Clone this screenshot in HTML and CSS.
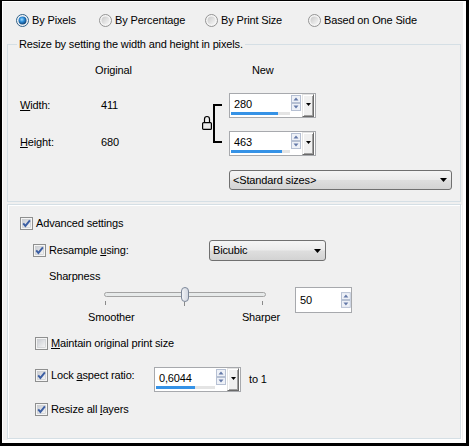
FILE: index.html
```html
<!DOCTYPE html>
<html>
<head>
<meta charset="utf-8">
<title>Resize</title>
<link rel="stylesheet" href="styles.css">
</head>
<body>
<svg class="defs" width="0" height="0" aria-hidden="true">
  <defs>
    <linearGradient id="rin" x1="0" y1="0" x2="1" y2="1">
      <stop offset="0" stop-color="#c8c8c8"/><stop offset="1" stop-color="#f8f8f8"/>
    </linearGradient>
    <radialGradient id="rdot" cx="0.42" cy="0.38" r="0.65">
      <stop offset="0" stop-color="#9fdcff"/><stop offset="0.45" stop-color="#2b8ad6"/><stop offset="1" stop-color="#0f3d6c"/>
    </radialGradient>
    <linearGradient id="cin" x1="0" y1="0" x2="1" y2="1">
      <stop offset="0" stop-color="#c9ccd2"/><stop offset="1" stop-color="#f6f6f6"/>
    </linearGradient>
    <linearGradient id="thumb" x1="0" y1="0" x2="1" y2="0">
      <stop offset="0" stop-color="#f4f5f8"/><stop offset="1" stop-color="#cfd4de"/>
    </linearGradient>
    <symbol id="r-off" viewBox="0 0 13 13">
      <circle cx="6.5" cy="6.5" r="6" fill="#f5f5f5" stroke="#939393"/>
      <circle cx="6.5" cy="6.5" r="4" fill="url(#rin)"/>
    </symbol>
    <symbol id="r-on" viewBox="0 0 13 13">
      <circle cx="6.5" cy="6.5" r="6" fill="#f3f5f8" stroke="#2f5f86"/>
      <circle cx="6.5" cy="6.5" r="4" fill="url(#rdot)"/>
    </symbol>
    <symbol id="c-off" viewBox="0 0 13 13">
      <rect x="0.5" y="0.5" width="12" height="12" fill="#f5f5f5" stroke="#8e8f8f"/>
      <rect x="2.5" y="2.5" width="8" height="8" fill="url(#cin)" stroke="#c4c6ca" stroke-width="0.6"/>
    </symbol>
    <symbol id="c-on" viewBox="0 0 13 13">
      <rect x="0.5" y="0.5" width="12" height="12" fill="#f5f5f5" stroke="#8e8f8f"/>
      <rect x="2.5" y="2.5" width="8" height="8" fill="url(#cin)" stroke="#c4c6ca" stroke-width="0.6"/>
      <path d="M3.2 6.3 L5.4 8.9 L9.9 3.4" fill="none" stroke="#3b5ea3" stroke-width="1.9"/>
    </symbol>
    <symbol id="arrows" viewBox="0 0 10 16">
      <rect x="0.5" y="0.5" width="9" height="7" fill="#eef1f7" stroke="#b6c0d3"/>
      <path d="M2.5 5.5 L5 2.5 L7.5 5.5Z" fill="#6479a8"/>
      <rect x="0.5" y="8.5" width="9" height="7" fill="#eef1f7" stroke="#b6c0d3"/>
      <path d="M2.5 10.5 L7.5 10.5 L5 13.5Z" fill="#6479a8"/>
    </symbol>
    <symbol id="tri" viewBox="0 0 7 4">
      <path d="M0 0 H7 L3.5 4Z" fill="#000"/>
    </symbol>
  </defs>
</svg>

<div class="frame">
  <div class="modes">
    <label class="opt o1"><svg class="rb"><use href="#r-on"/></svg><span>By Pixels</span></label>
    <label class="opt o2"><svg class="rb"><use href="#r-off"/></svg><span>By Percentage</span></label>
    <label class="opt o3"><svg class="rb"><use href="#r-off"/></svg><span>By Print Size</span></label>
    <label class="opt"><svg class="rb"><use href="#r-off"/></svg><span>Based on One Side</span></label>
  </div>

  <fieldset class="group g1">
    <legend>Resize by setting the width and height in pixels.</legend>
    <div class="dims">
      <span class="h-orig">Original</span>
      <span class="h-new">New</span>

      <span class="lbl row2"><u>W</u>idth:</span>
      <span class="val row2">411</span>
      <svg class="link" width="28" height="63" viewBox="0 0 28 63">
        <path d="M21 12 H13 V49 H21" fill="none" stroke="#000" stroke-width="2"/>
        <path d="M3.5 29.5 V26 a2.5 2.5 0 0 1 5 0 V29.5" fill="none" stroke="#000" stroke-width="1.2"/>
        <rect x="1.6" y="29.6" width="8.8" height="6.8" rx="1" fill="#e9e9e9" stroke="#000" stroke-width="1.2"/>
      </svg>
      <div class="spin sp-r2">
        <div class="field"><span class="txt">280</span><div class="track"><i class="fill" style="width:47px"></i></div></div>
        <svg class="arr" width="10" height="16"><use href="#arrows"/></svg>
        <div class="dd"><svg width="5" height="3" viewBox="0 0 7 4" preserveAspectRatio="none"><use href="#tri"/></svg></div>
      </div>

      <span class="lbl row3"><u>H</u>eight:</span>
      <span class="val row3">680</span>
      <div class="spin sp-r3">
        <div class="field"><span class="txt">463</span><div class="track"><i class="fill" style="width:51px"></i></div></div>
        <svg class="arr" width="10" height="16"><use href="#arrows"/></svg>
        <div class="dd"><svg width="5" height="3" viewBox="0 0 7 4" preserveAspectRatio="none"><use href="#tri"/></svg></div>
      </div>

      <div class="select std"><span>&lt;Standard sizes&gt;</span><svg width="7" height="4"><use href="#tri"/></svg></div>
    </div>
  </fieldset>

  <fieldset class="group g2">
    <label class="chk adv"><svg class="cb"><use href="#c-on"/></svg><span>Advanced settings</span></label>

    <div class="res">
      <label class="chk res-l"><svg class="cb"><use href="#c-on"/></svg><span>Resample <u>u</u>sing:</span></label>
      <div class="select bicubic"><span>Bicubic</span><svg width="7" height="4"><use href="#tri"/></svg></div>
    </div>

    <div class="sharp">Sharpness</div>

    <div class="slrow">
      <div class="slider">
        <svg class="sl-svg" width="192" height="24" viewBox="0 0 192 24">
          <rect x="16.5" y="5.5" width="161" height="4" rx="2" fill="#e7eaea" stroke="#a3a3a3"/>
          <path d="M17.5 14 v4 M96.5 15 v4 M174.5 14 v4" stroke="#8a8a8a"/>
          <rect x="93.5" y="0.5" width="7" height="14" rx="3.5" fill="url(#thumb)" stroke="#7b8698"/>
        </svg>
        <div class="sl-labels"><span>Smoother</span><span>Sharper</span></div>
      </div>
      <div class="spin s50">
        <div class="field"><span class="txt">50</span></div>
        <svg class="arr" width="10" height="16"><use href="#arrows"/></svg>
      </div>
    </div>

    <label class="chk maint"><svg class="cb"><use href="#c-off"/></svg><span><u>M</u>aintain original print size</span></label>

    <div class="lockrow">
      <label class="chk lock-l"><svg class="cb"><use href="#c-on"/></svg><span>Lock <u>a</u>spect ratio:</span></label>
      <div class="spin">
        <div class="field"><span class="txt">0,6044</span><div class="track"><i class="fill" style="width:39px"></i></div></div>
        <svg class="arr" width="10" height="16"><use href="#arrows"/></svg>
        <div class="dd"><svg width="5" height="3" viewBox="0 0 7 4" preserveAspectRatio="none"><use href="#tri"/></svg></div>
      </div>
      <span class="to1">to 1</span>
    </div>

    <label class="chk resize"><svg class="cb"><use href="#c-on"/></svg><span>Resize all <u>l</u>ayers</span></label>
  </fieldset>
</div>
</body>
</html>
```

FILE: styles.css
```css
html, body {
  margin: 0;
  background: #000;
}

body {
  font-family: "Liberation Sans", Arial, sans-serif;
  font-size: 11px;
  line-height: 13px;
  color: #000;
  letter-spacing: -0.15px;
}

.defs {
  position: absolute;
  width: 0;
  height: 0;
  overflow: hidden;
}

.frame {
  margin: 1px 0 0 2px;
  width: 460px;
  height: 438px;
  border-style: solid;
  border-color: #fff;
  border-width: 1px 3px 3px 1px;
  background: #f0f0f0;
}

/* radio row */
.modes {
  display: flex;
  align-items: center;
  height: 36px;
  padding-left: 13px;
}

.opt {
  display: flex;
  align-items: center;
  gap: 3px;
}

.rb {
  width: 13px;
  height: 13px;
  display: block;
}

.o1 { width: 83px; }
.o2 { width: 106px; }
.o3 { width: 103px; }

/* group boxes */
.group {
  margin: 0 0 0 4px;
  padding: 0;
  width: 454px;
  min-width: 0;
  box-sizing: border-box;
  border: 1px solid #d5dfe5;
}

.group legend {
  margin-left: 9px;
  padding: 0 2px;
  line-height: 13px;
}

.g1 {
  height: 164px;
}

.g2 {
  margin-top: 2px;
  height: 235px;
  box-shadow: inset 1px 1px 0 #fff, 1px 1px 0 #fff;
}

/* dimension grid */
.dims {
  display: grid;
  grid-template-columns: 81px 100px 28px 1fr;
  grid-template-rows: 29px 38px 39px 20px;
  align-items: start;
  margin: 13px 0 0 12px;
}

.h-orig {
  grid-column: 1 / 3;
  grid-row: 1;
  padding-left: 75px;
}

.h-new {
  grid-column: 4;
  grid-row: 1;
  padding-left: 23px;
}

.lbl { grid-column: 1; }
.val { grid-column: 2; }
.row2 { grid-row: 2; margin-top: 6px; }
.row3 { grid-row: 3; margin-top: 5px; }

.link {
  grid-column: 3;
  grid-row: 2 / 4;
  display: block;
}

.sp-r2 { grid-column: 4; grid-row: 2; }
.sp-r3 { grid-column: 4; grid-row: 3; }

.std {
  grid-column: 4;
  grid-row: 4;
  width: 223px;
}

/* spin boxes */
.spin {
  display: flex;
  width: 87px;
  height: 25px;
  box-sizing: border-box;
  border: 1px solid #a7a9ad;
  background: #fff;
}

.field {
  width: 61px;
  padding-top: 4px;
  box-sizing: border-box;
}

.txt {
  display: block;
  height: 13px;
  padding-left: 4px;
}

.track {
  margin: 1px 0 0 1px;
  width: 59px;
  height: 3px;
  background: #e4e4e4;
}

.fill {
  display: block;
  height: 3px;
  background: #3592e6;
}

.arr {
  display: block;
  align-self: flex-start;
  margin-top: 1px;
}

.dd {
  width: 12px;
  margin-left: 1px;
  box-sizing: border-box;
  background: #f0f0f0;
  border: 1px solid;
  border-color: #e3e3e3 #696969 #696969 #e3e3e3;
  box-shadow: inset 1px 1px 0 #fff, inset -1px -1px 0 #a0a0a0;
  display: flex;
  align-items: center;
  justify-content: center;
  padding-bottom: 2px;
}

.dd svg { display: block; }

.s50 {
  width: 57px;
  height: 26px;
  align-items: center;
}

.s50 .field {
  width: 46px;
  padding-top: 0;
}

.s50 .arr {
  align-self: center;
  margin-top: 0;
}

/* combo boxes */
.select {
  display: flex;
  align-items: center;
  justify-content: space-between;
  box-sizing: border-box;
  height: 20px;
  padding: 0 4px 0 3px;
  border: 1px solid #707070;
  border-radius: 3px;
  background: linear-gradient(#f5f5f5, #ebebeb 48%, #dedede 52%, #d3d3d3);
}

.select svg { display: block; }

.bicubic {
  width: 117px;
  height: 21px;
}

/* checkboxes */
.chk {
  display: flex;
  align-items: center;
  gap: 3px;
  height: 13px;
}

.cb {
  width: 13px;
  height: 13px;
  display: block;
  flex: none;
}

.adv {
  margin: 12px 0 0 12px;
}

.res {
  display: flex;
  align-items: center;
  height: 21px;
  margin: 10px 0 0 25px;
}

.res-l {
  width: 176px;
}

.sharp {
  margin: 9px 0 0 41px;
}

.slrow {
  display: flex;
  align-items: flex-start;
  margin: 4px 0 0 80px;
}

.slider {
  width: 192px;
}

.sl-svg { display: block; }

.sl-labels {
  display: flex;
  justify-content: space-between;
  height: 13px;
}

.s50 { margin-left: 15px; }

.maint {
  margin: 13px 0 0 27px;
}

.lockrow {
  display: flex;
  align-items: flex-start;
  margin: 17px 0 0 27px;
}

.lock-l {
  width: 119px;
  margin-top: 2px;
}

.to1 {
  margin: 6px 0 0 8px;
}

.resize {
  margin: 11px 0 0 27px;
}
```
